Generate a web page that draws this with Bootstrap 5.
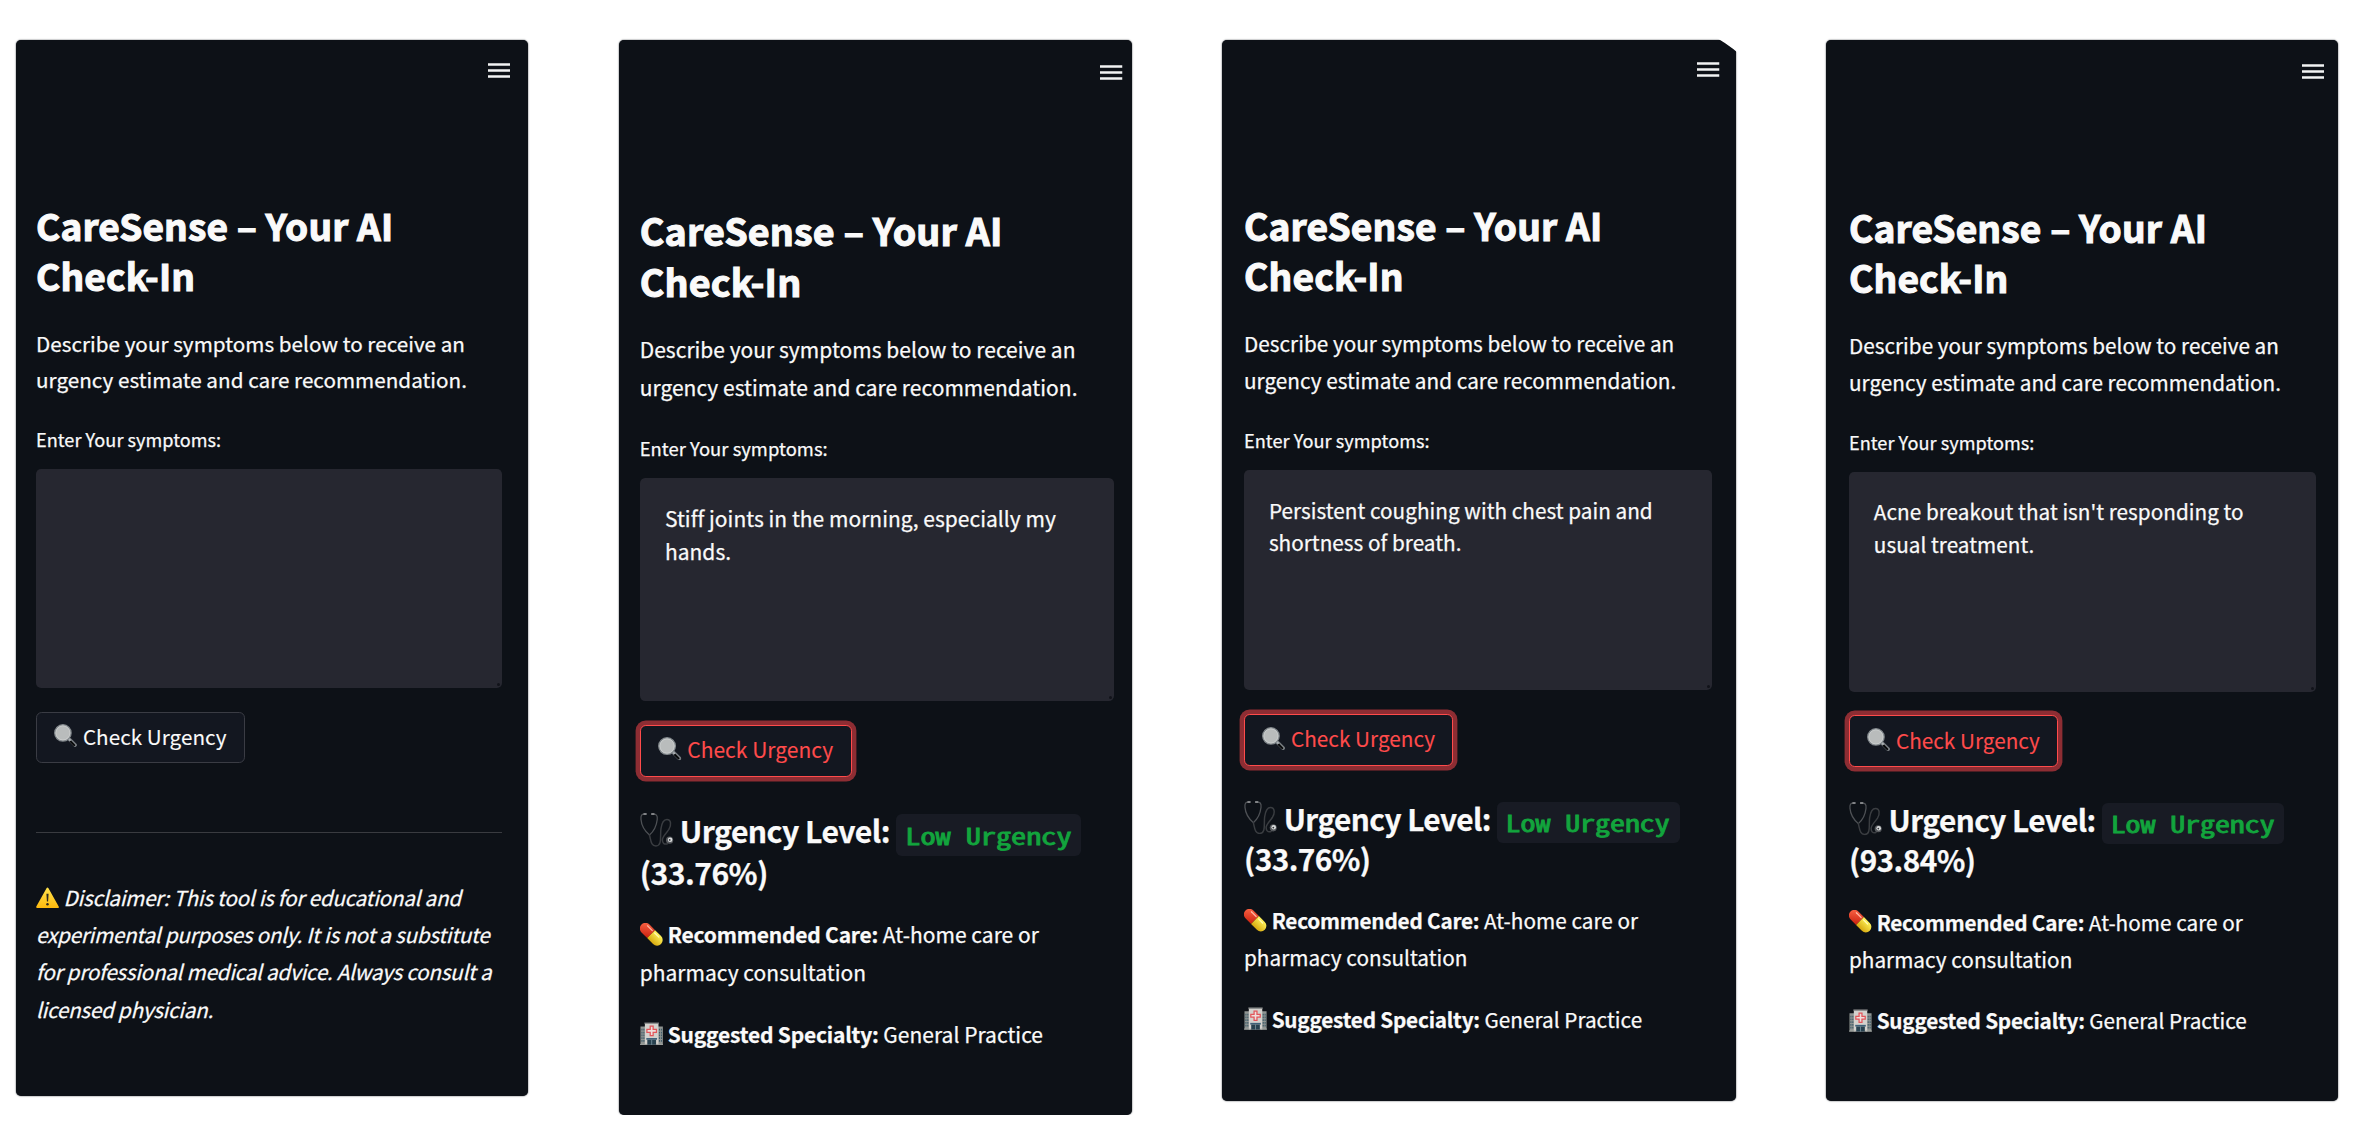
<!DOCTYPE html>
<html lang="en">
<head>
<meta charset="utf-8">
<title>CareSense – Your AI Check-In</title>
<link href="https://cdn.jsdelivr.net/npm/bootstrap@5.3.0/dist/css/bootstrap.min.css" rel="stylesheet">
<style>
  body { background:#fff; font-family:"Noto Sans CJK SC","Noto Sans",sans-serif; overflow:hidden; }
  .board { padding:40px 0 0 16px; }
  .phone { --r:23px; width:512px; height:1056px; background:#0d1117; color:#fafafa; border-radius:5px; box-shadow:0 0 1.5px #0d1117;
           padding-left:var(--pl); padding-right:var(--pr); font-size:calc(var(--r)*.898); line-height:calc(var(--r)*1.607); letter-spacing:.035px;
           -webkit-text-stroke:.25px currentColor; flex:none; }
  .phone-a { --pl:20px; --pr:26px; margin-right:90.7px; }
  .phone-b { --r:23.37px; --pl:21px; --pr:18.2px; width:513.3px; height:1074.5px; margin-right:90px; }
  .phone-c { --r:23.07px; --pl:22px; --pr:23.7px; width:513.7px; height:1061px; margin-right:90.8px; }
  .phone-d { --r:23.05px; --pl:22.5px; --pr:22.6px; width:512px; height:1060.5px; }
  .phone-c::after { content:""; position:absolute; top:-4px; right:-6px; width:28px; height:20px; background:#fff; clip-path:polygon(0 0,100% 0,100% 100%,70% 65%,40% 35%); filter:blur(1px); }
  .topbar { height:calc(var(--r)*6.99 + var(--dy,0px)); }
  .phone-d .topbar { --dy:2px; }
  .phone-b .topbar { --dy:2px; }
  .burger { width:22.5px; height:15px; margin-top:22.5px; margin-right:var(--mr); }
  .phone-a .burger { --mr:-8px; }
  .phone-b .burger { --mr:-8.8px; margin-top:25px; }
  .phone-c .burger { --mr:-8px; margin-top:22px; }
  .phone-d .burger { --mr:-8.3px; margin-top:24px; }
  h1 { font-size:calc(var(--r)*1.611); line-height:calc(var(--r)*2.165); font-weight:700; margin:0 0 calc(var(--r)*1.05); letter-spacing:.15px; -webkit-text-stroke:1.1px currentColor; }
  .intro { margin:0 0 calc(var(--r)*1.15); }
  .field-label { font-size:calc(var(--r)*.787); line-height:calc(var(--r)*1.3); margin:0 0 calc(var(--r)*.62); display:block; }
  .symptoms { background:#262730; border-radius:calc(var(--r)*.22); height:calc(var(--r)*9.53); padding:calc(var(--r)*1.01) calc(var(--r)*1.08); line-height:calc(var(--r)*1.415); margin-bottom:calc(var(--r)*1.03); }
  .grip { right:2px; bottom:2px; width:3px; height:3px; background:#11131a; border-radius:50%; }
  .btn.check { height:calc(var(--r)*2.24); padding:0 calc(var(--r)*.755) 2px; border:1.3px solid #3a3c44; border-radius:calc(var(--r)*.25); background:#131720; color:#fafafa;
               font-size:inherit; letter-spacing:.04px; line-height:1; display:inline-flex; align-items:center; -webkit-text-stroke:.1px currentColor; }
  .btn.check.hot { border:1.6px solid #ff4b4b; color:#ff4b4b; box-shadow:0 0 0 4.4px #8d2d33; }
  .rule { height:1.3px; background:#393b40; margin:calc(var(--r)*2.98) 0 calc(var(--r)*1.98); }
  .disclaimer { font-style:italic; line-height:calc(var(--r)*1.62); letter-spacing:-.25px; }
  h3 { font-size:calc(var(--r)*1.29); line-height:calc(var(--r)*1.72); font-weight:700; letter-spacing:-.56px; margin:calc(var(--r)*1.43) 0 calc(var(--r)*1.02); }
  .level { color:#12a53d; background:#181b24; border-radius:calc(var(--r)*.25); letter-spacing:0;
           height:calc(var(--r)*1.79); width:calc(var(--r)*7.92); display:inline-flex; align-items:center; justify-content:center; margin:-4px 0 -4px; vertical-align:middle; }
  .level span { font-family:"Noto Sans Mono CJK SC","Noto Sans Mono","DejaVu Sans Mono",monospace; font-size:calc(var(--r)*.98); font-weight:400; -webkit-text-stroke:.8px currentColor; white-space:pre; transform:translateX(-.5px) scaleX(1.32); }
  strong { letter-spacing:-.2px; }
  .result p { margin:0 0 calc(var(--r)*1.04); }
  .emo { width:calc(var(--r)*1); height:calc(var(--r)*1); flex:none; vertical-align:-.14em; margin-right:calc(var(--r)*.2); }
  .check .emo { margin-top:calc(var(--r)*-.06); margin-right:calc(var(--r)*.24); }
  h3 .emo { width:calc(var(--r)*1.45); height:calc(var(--r)*1.45); vertical-align:-.13em; margin-right:calc(var(--r)*.27); }
  .line { white-space:nowrap; display:block; }
</style>
</head>
<body>
<svg width="0" height="0" class="position-absolute">
  <defs>
    <linearGradient id="gRed" x1="0" y1="0" x2="1" y2="1"><stop offset="0" stop-color="#ff6a4a"/><stop offset="1" stop-color="#c9200e"/></linearGradient>
    <linearGradient id="gYel" x1="0" y1="0" x2="0" y2="1"><stop offset="0" stop-color="#fff35a"/><stop offset="1" stop-color="#d7a90f"/></linearGradient>
    <linearGradient id="gWarn" x1="0" y1="0" x2="0" y2="1"><stop offset="0" stop-color="#ffe14a"/><stop offset="1" stop-color="#fdbb10"/></linearGradient>
    <symbol id="lens" viewBox="0 0 24 24">
      <path d="M16 16 22 22" stroke="#777c80" stroke-width="3.800" stroke-linecap="round"/>
      <path d="M17.300 18.200l3.800 3.800" stroke="#050607" stroke-width="2" stroke-linecap="round"/>
      <path d="M14.500 14.500l2.800 2.800" stroke="#b0b5b9" stroke-width="1.800"/>
      <circle cx="9.300" cy="9.300" r="8.500" fill="#b9bcbc" stroke="#82888c" stroke-width="1.500"/>
      <circle cx="9.300" cy="9.300" r="7.400" fill="none" stroke="#d3d5d5" stroke-width=".7"/>
    </symbol>
    <symbol id="warn" viewBox="0 0 24 24">
      <path d="M12 2.600 22.800 22H1.200Z" fill="url(#gWarn)" stroke="url(#gWarn)" stroke-width="2" stroke-linejoin="round"/>
      <path d="M10.900 8.200h2.200l-.5 8h-1.200Z" fill="#2c2a20"/><circle cx="12" cy="19" r="1.300" fill="#2c2a20"/>
    </symbol>
    <symbol id="steth" viewBox="0 0 34 34">
      <g fill="none" stroke-linecap="round">
        <path d="M5.500 1.200C1.500.6.6 2.500 1 6.500c.5 6 3.200 11 8.500 15.500" stroke="#4e5155" stroke-width="1.300"/>
        <path d="M12 1.200c4.500-.6 5.800 1.200 5.300 5.300-.7 6-3 11.500-7.800 15.500" stroke="#4e5155" stroke-width="1.300"/>
        <path d="M4 1.100h2.200M11.800 1.100H14" stroke="#9a9c9e" stroke-width="1.500"/>
        <path d="M9.500 22c1.500 6 1.500 11 6.500 11 6.500 0 4-10 5-17 .8-6 2.500-9.500 6-9.500 4.500 0 4.500 6 2 10-2.500 3.800-6.500 7-6.500 10.500 0 3.200 1.500 4.800 5 4" stroke="#3a3d41" stroke-width="1.500"/>
      </g>
      <circle cx="29.700" cy="27.300" r="3.600" fill="#56595d"/><circle cx="30.200" cy="26.800" r="2.300" fill="#d9dbdc"/><circle cx="29.800" cy="27" r=".9" fill="#34373b"/>
    </symbol>
    <symbol id="pill" viewBox="0 0 24 24">
      <g transform="rotate(45 12 12)">
        <path d="M12 6.200H3.800a5.800 5.800 0 0 0 0 11.600H12Z" fill="url(#gRed)" transform="translate(-.8)"/>
        <path d="M11.200 6.200h8.600a5.800 5.800 0 0 1 0 11.600h-8.600Z" fill="url(#gYel)"/>
        <path d="M2.500 8.600h7" stroke="#ffb5a0" stroke-width="1.300" stroke-linecap="round"/>
        <path d="M13 8.600h6" stroke="#fffbb5" stroke-width="1.300" stroke-linecap="round"/>
      </g>
    </symbol>
    <symbol id="hosp" viewBox="0 0 24 24">
      <path d="M.5 4.500H6v19H.5ZM18 4.500h5.500v19H18Z" fill="#8f9492"/>
      <path d="M5 1h14v22.500H5Z" fill="#d3d1cd"/><path d="M4.500.4h15v1.400h-15Z" fill="#77797a"/>
      <path d="M2 7v14M4 7v14M20 7v14M22 7v14" stroke="#3c5a68" stroke-width="1.100" stroke-dasharray="1.800 1.100"/>
      <path d="M10.500 4.200h3v3.400h3.400v3h-3.400v3.400h-3v-3.400H7.100v-3h3.400Z" fill="#eedfdd" stroke="#e2555a" stroke-width="1.300"/>
      <path d="M6.500 16.500h11v1.800h-11Z" fill="#3e6179"/><path d="M7.500 18.300h9v5.200h-9Z" fill="#27414f"/><path d="M12 18.300v5.200" stroke="#7d98a2" stroke-width=".8"/>
      <path d="M0 23h7M17 23h7" stroke="#a3a6a2" stroke-width="1"/>
    </symbol>
    <symbol id="bars" viewBox="0 0 22.500 15"><path d="M0 1.500h22.500M0 7.500h22.500M0 13.500h22.500" stroke="#f2f3f4" stroke-width="2.500"/></symbol>
  </defs>
</svg>

<main class="board d-flex align-items-start">
  <section class="phone phone-a">
    <header class="topbar d-flex justify-content-end"><svg class="burger"><use href="#bars"/></svg></header>
    <h1><span class="line">CareSense – Your AI</span><span class="line">Check-In</span></h1>
    <p class="intro"><span class="line">Describe your symptoms below to receive an</span><span class="line">urgency estimate and care recommendation.</span></p>
    <label class="field-label">Enter Your symptoms:</label>
    <div class="symptoms position-relative"><span class="grip position-absolute"></span></div>
    <button class="btn check"><svg class="emo"><use href="#lens"/></svg>Check Urgency</button>
    <div class="rule"></div>
    <p class="disclaimer mb-0"><span class="line"><svg class="emo"><use href="#warn"/></svg>Disclaimer: This tool is for educational and</span><span class="line">experimental purposes only. It is not a substitute</span><span class="line">for professional medical advice. Always consult a</span><span class="line">licensed physician.</span></p>
  </section>

  <section class="phone phone-b">
    <header class="topbar d-flex justify-content-end"><svg class="burger"><use href="#bars"/></svg></header>
    <h1><span class="line">CareSense – Your AI</span><span class="line">Check-In</span></h1>
    <p class="intro"><span class="line">Describe your symptoms below to receive an</span><span class="line">urgency estimate and care recommendation.</span></p>
    <label class="field-label">Enter Your symptoms:</label>
    <div class="symptoms position-relative"><span class="line">Stiff joints in the morning, especially my</span><span class="line">hands.</span><span class="grip position-absolute"></span></div>
    <button class="btn check hot"><svg class="emo"><use href="#lens"/></svg>Check Urgency</button>
    <div class="result">
      <h3><span class="line"><svg class="emo"><use href="#steth"/></svg>Urgency Level: <span class="level"><span>Low Urgency</span></span></span><span class="line">(33.76%)</span></h3>
      <p><span class="line"><svg class="emo"><use href="#pill"/></svg><strong>Recommended Care:</strong> At-home care or</span><span class="line">pharmacy consultation</span></p>
      <p><span class="line"><svg class="emo"><use href="#hosp"/></svg><strong>Suggested Specialty:</strong> General Practice</span></p>
    </div>
  </section>

  <section class="phone phone-c position-relative">
    <header class="topbar d-flex justify-content-end"><svg class="burger"><use href="#bars"/></svg></header>
    <h1><span class="line">CareSense – Your AI</span><span class="line">Check-In</span></h1>
    <p class="intro"><span class="line">Describe your symptoms below to receive an</span><span class="line">urgency estimate and care recommendation.</span></p>
    <label class="field-label">Enter Your symptoms:</label>
    <div class="symptoms position-relative"><span class="line">Persistent coughing with chest pain and</span><span class="line">shortness of breath.</span><span class="grip position-absolute"></span></div>
    <button class="btn check hot"><svg class="emo"><use href="#lens"/></svg>Check Urgency</button>
    <div class="result">
      <h3><span class="line"><svg class="emo"><use href="#steth"/></svg>Urgency Level: <span class="level"><span>Low Urgency</span></span></span><span class="line">(33.76%)</span></h3>
      <p><span class="line"><svg class="emo"><use href="#pill"/></svg><strong>Recommended Care:</strong> At-home care or</span><span class="line">pharmacy consultation</span></p>
      <p><span class="line"><svg class="emo"><use href="#hosp"/></svg><strong>Suggested Specialty:</strong> General Practice</span></p>
    </div>
  </section>

  <section class="phone phone-d">
    <header class="topbar d-flex justify-content-end"><svg class="burger"><use href="#bars"/></svg></header>
    <h1><span class="line">CareSense – Your AI</span><span class="line">Check-In</span></h1>
    <p class="intro"><span class="line">Describe your symptoms below to receive an</span><span class="line">urgency estimate and care recommendation.</span></p>
    <label class="field-label">Enter Your symptoms:</label>
    <div class="symptoms position-relative"><span class="line">Acne breakout that isn't responding to</span><span class="line">usual treatment.</span><span class="grip position-absolute"></span></div>
    <button class="btn check hot"><svg class="emo"><use href="#lens"/></svg>Check Urgency</button>
    <div class="result">
      <h3><span class="line"><svg class="emo"><use href="#steth"/></svg>Urgency Level: <span class="level"><span>Low Urgency</span></span></span><span class="line">(93.84%)</span></h3>
      <p><span class="line"><svg class="emo"><use href="#pill"/></svg><strong>Recommended Care:</strong> At-home care or</span><span class="line">pharmacy consultation</span></p>
      <p><span class="line"><svg class="emo"><use href="#hosp"/></svg><strong>Suggested Specialty:</strong> General Practice</span></p>
    </div>
  </section>
</main>
<script src="https://cdn.jsdelivr.net/npm/bootstrap@5.3.0/dist/js/bootstrap.bundle.min.js"></script>
</body>
</html>
